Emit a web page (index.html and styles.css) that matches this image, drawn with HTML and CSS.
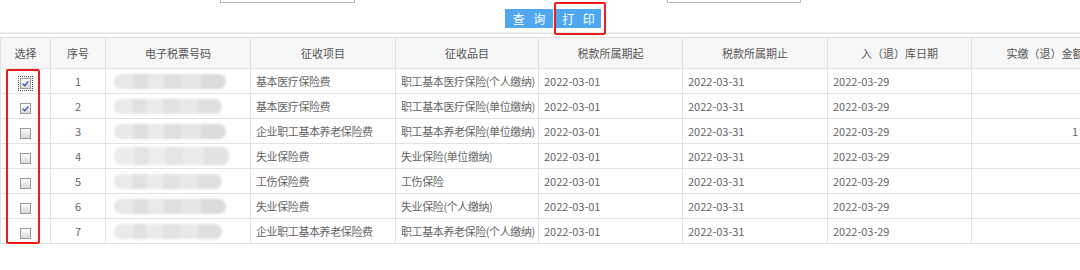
FILE: index.html
```html
<!DOCTYPE html>
<html lang="zh">
<head>
<meta charset="utf-8">
<link rel="stylesheet" href="styles.css">
</head>
<body>
<div class="page">
  <div class="search-row">
    <div class="field field-left"></div>
    <div class="field field-right"></div>
  </div>
  <div class="btn-row">
    <button class="btn">查 询</button>
    <button class="btn btn-print">打 印<span class="mark mark-print"></span></button>
  </div>
  <div class="sep"></div>
  <div class="table-wrap">
    <span class="mark mark-checks"></span>
    <table class="grid">
      <colgroup>
        <col class="c0"><col class="c1"><col class="c2"><col class="c3"><col class="c4"><col class="c5"><col class="c6"><col class="c7"><col class="c8">
      </colgroup>
      <thead>
        <tr>
          <th>选择</th><th>序号</th><th>电子税票号码</th><th>征收项目</th><th>征收品目</th><th>税款所属期起</th><th>税款所属期止</th><th>入（退）库日期</th><th>实缴（退）金额</th>
        </tr>
      </thead>
      <tbody>
        <tr>
          <td class="ck"><span class="box on focus"><svg viewBox="0 0 10 10"><path d="M2 5.2 L4.2 7.4 L8.2 2.6" /></svg></span></td>
          <td class="num">1</td>
          <td><span class="blur b1"></span></td>
          <td class="zh">基本医疗保险费</td><td class="zh">职工基本医疗保险(个人缴纳)</td><td>2022-03-01</td><td>2022-03-31</td><td>2022-03-29</td><td class="amt"></td>
        </tr>
        <tr>
          <td class="ck"><span class="box on"><svg viewBox="0 0 10 10"><path d="M2 5.2 L4.2 7.4 L8.2 2.6" /></svg></span></td>
          <td class="num">2</td>
          <td><span class="blur b2"></span></td>
          <td class="zh">基本医疗保险费</td><td class="zh">职工基本医疗保险(单位缴纳)</td><td>2022-03-01</td><td>2022-03-31</td><td>2022-03-29</td><td class="amt"></td>
        </tr>
        <tr>
          <td class="ck"><span class="box"></span></td>
          <td class="num">3</td>
          <td><span class="blur b1"></span></td>
          <td class="zh">企业职工基本养老保险费</td><td class="zh">职工基本养老保险(单位缴纳)</td><td>2022-03-01</td><td>2022-03-31</td><td>2022-03-29</td><td class="amt">1</td>
        </tr>
        <tr>
          <td class="ck"><span class="box"></span></td>
          <td class="num">4</td>
          <td><span class="blur b3"></span></td>
          <td class="zh">失业保险费</td><td class="zh">失业保险(单位缴纳)</td><td>2022-03-01</td><td>2022-03-31</td><td>2022-03-29</td><td class="amt"></td>
        </tr>
        <tr>
          <td class="ck"><span class="box"></span></td>
          <td class="num">5</td>
          <td><span class="blur b2"></span></td>
          <td class="zh">工伤保险费</td><td class="zh">工伤保险</td><td>2022-03-01</td><td>2022-03-31</td><td>2022-03-29</td><td class="amt"></td>
        </tr>
        <tr>
          <td class="ck"><span class="box"></span></td>
          <td class="num">6</td>
          <td><span class="blur b1"></span></td>
          <td class="zh">失业保险费</td><td class="zh">失业保险(个人缴纳)</td><td>2022-03-01</td><td>2022-03-31</td><td>2022-03-29</td><td class="amt"></td>
        </tr>
        <tr>
          <td class="ck"><span class="box"></span></td>
          <td class="num">7</td>
          <td><span class="blur b2"></span></td>
          <td class="zh">企业职工基本养老保险费</td><td class="zh">职工基本养老保险(个人缴纳)</td><td>2022-03-01</td><td>2022-03-31</td><td>2022-03-29</td><td class="amt"></td>
        </tr>
      </tbody>
    </table>
  </div>
</div>
</body>
</html>
```

FILE: styles.css
```css
html, body {
  margin: 0;
  padding: 0;
  background: #fff;
  overflow: hidden;
}
body {
  width: 1080px;
  height: 270px;
  font-family: "Noto Sans CJK SC", "Noto Sans", sans-serif;
  font-size: 11px;
  color: #666;
}
.page {
  display: flex;
  flex-direction: column;
}
.search-row {
  height: 3px;
  display: flex;
  align-items: flex-end;
  overflow: hidden;
}
.field {
  height: 24px;
  box-sizing: border-box;
  border: 1px solid #b8b8b8;
  background: #fff;
  flex: none;
}
.field-left {
  margin-left: 220px;
  width: 135px;
}
.field-right {
  margin-left: 312px;
  width: 134px;
}
.btn-row {
  display: flex;
  gap: 3px;
  margin-left: 505px;
  margin-top: 6px;
  height: 19px;
}
.btn {
  position: relative;
  width: 48px;
  height: 19px;
  padding: 0;
  border: none;
  background: #4fa7ef;
  color: #fff;
  font-family: "Noto Sans CJK SC", sans-serif;
  font-size: 12px;
  letter-spacing: 3px;
  text-indent: 3px;
  line-height: 19px;
}
.btn-print {
  width: 45px;
}
.mark {
  position: absolute;
  border: 2px solid #ee1b1b;
  border-radius: 2px;
  box-sizing: border-box;
  pointer-events: none;
}
.mark-print {
  left: -2px;
  top: -7px;
  width: 52px;
  height: 33px;
}
.sep {
  margin-top: 4px;
  height: 2px;
  background: #ececec;
}
.table-wrap {
  position: relative;
  margin-top: 3px;
}
.mark-checks {
  left: 6px;
  top: 32px;
  width: 34px;
  height: 175px;
  z-index: 2;
}
.grid {
  border-collapse: collapse;
  table-layout: fixed;
  width: 1118px;
}
.c0 { width: 50px; }
.c1 { width: 55px; }
.c2 { width: 145px; }
.c3 { width: 145px; }
.c4 { width: 143px; }
.c5 { width: 144px; }
.c6 { width: 145px; }
.c7 { width: 144px; }
.c8 { width: 147px; }
.grid th,
.grid td {
  border: 1px solid #e2e2e2;
  white-space: nowrap;
  overflow: hidden;
}
.grid th {
  height: 30px;
  padding: 0;
  background: #f7f7f7;
  font-weight: normal;
  color: #555;
  text-align: center;
}
.grid td {
  height: 24px;
  padding: 0 0 0 5px;
  text-align: left;
  color: #666;
}
.grid td.zh {
  letter-spacing: -0.4px;
  padding-left: 5px;
}
.grid td.ck,
.grid td.num {
  text-align: center;
  padding: 0;
}
.grid td.amt {
  text-align: right;
  padding-right: 40px;
}
.box {
  display: inline-block;
  vertical-align: middle;
  width: 11px;
  height: 11px;
  box-sizing: border-box;
  border: 1px solid #9a9a9a;
  background: linear-gradient(#fdfdfd, #d9d9d9);
  position: relative;
}
.box svg {
  position: absolute;
  left: 0;
  top: 0;
  width: 9px;
  height: 9px;
}
.box svg path {
  fill: none;
  stroke: #3b55b8;
  stroke-width: 1.6;
}
.box.focus {
  outline: 1px dotted #444;
  outline-offset: 1px;
}
.blur {
  display: block;
  height: 15px;
  margin-left: 3px;
  border-radius: 7px;
  filter: blur(1.2px);
  background: linear-gradient(90deg, #e8e8e8 0 18%, #dedede 18% 30%, #e9e9e9 30% 45%, #dfdfdf 45% 60%, #e6e6e6 60% 78%, #dcdcdc 78% 100%);
}
.b1 { width: 112px; }
.b2 { width: 108px; opacity: 0.9; }
.b3 { width: 115px; height: 18px; opacity: 0.8; }
```
